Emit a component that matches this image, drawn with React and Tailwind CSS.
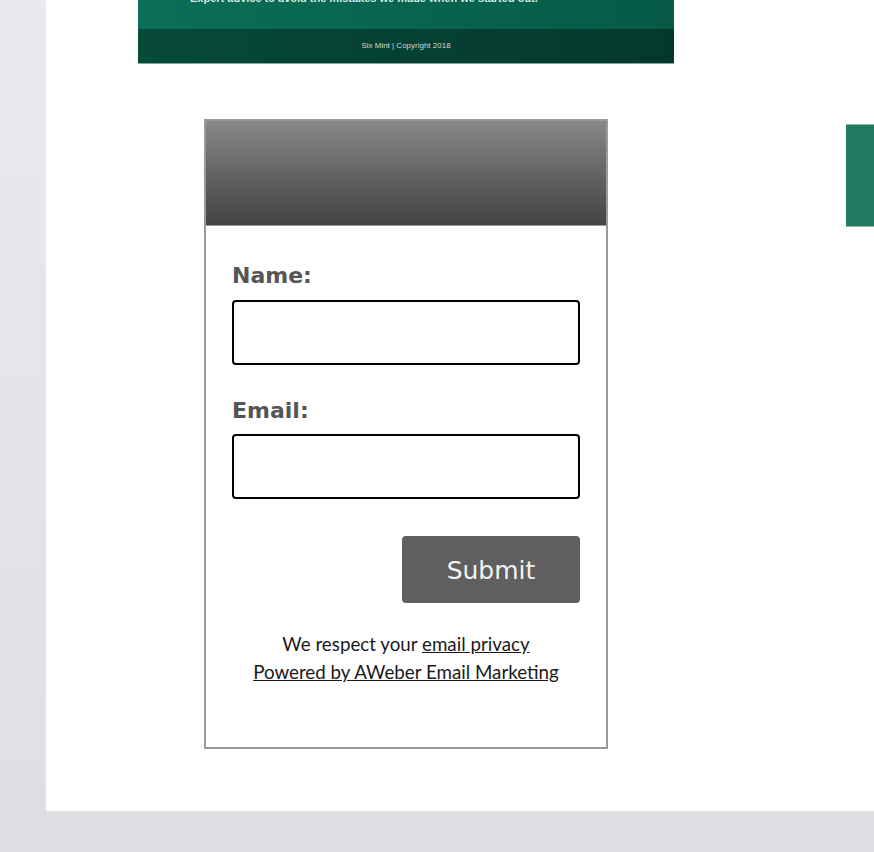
import React from "react";

const BannerImage = () => (
  <div className="ml-[92px] w-[536px] h-[64px] flex flex-col overflow-hidden">
    <div className="h-[29px] bg-gradient-to-r from-[#0a6f58] to-[#065a46] overflow-hidden">
      <p className="-mt-[9px] pl-[52px] text-[11px] leading-[14px] text-[#d8ece6] font-['Liberation_Sans',sans-serif] font-semibold whitespace-nowrap">
        Expert advice to avoid the mistakes we made when we started out.
      </p>
    </div>
    <div className="h-[34px] bg-gradient-to-r from-[#064a3a] to-[#05382c] flex items-center justify-center">
      <span className="text-[8px] text-[#d0d8d5] font-['Liberation_Sans',sans-serif]">
        Six Mint | Copyright 2018
      </span>
    </div>
    <div className="h-[1px] bg-[#7fa89c]"></div>
  </div>
);

const SignupForm = () => (
  <div className="w-[404px] h-[630px] border-2 border-[#9a9a9a] bg-white flex flex-col">
    <div className="h-[105px] bg-gradient-to-b from-[#888888] to-[#444444] border-b border-[#9a9a9a]"></div>

    <div className="px-[26px] pt-[38px] font-['DejaVu_Sans',sans-serif]">
      <label className="block text-[22px] leading-[23px] font-bold text-[#555555]">Name:</label>
      <div className="mt-[13px] w-[348px] h-[65px] border-2 border-black rounded-[4px]"></div>

      <label className="block mt-[34px] text-[22px] leading-[23px] font-bold text-[#555555]">Email:</label>
      <div className="mt-[12px] w-[348px] h-[65px] border-2 border-black rounded-[4px]"></div>

      <div className="w-[348px] flex justify-end mt-[37px]">
        <button className="w-[178px] h-[67px] pt-[2px] bg-[#5f5f5f] rounded-[4px] text-[25px] text-[#f2f2f2]">
          Submit
        </button>
      </div>
    </div>

    <div className="mt-[27px] text-center text-[18.75px] leading-[28px] text-[#1a1a1a] font-['Lato',sans-serif]">
      <p>
        We respect your <span className="underline">email privacy</span>
      </p>
      <p className="underline">Powered by AWeber Email Marketing</p>
    </div>
  </div>
);

export default function App() {
  return (
    <div className="w-[874px] h-[852px] overflow-hidden bg-gradient-to-b from-[#e9eaed] to-[#dedfe3] pl-[46px]">
      <div className="h-[811px] bg-white">
        <BannerImage />
        <div className="flex items-start mt-[55px]">
          <div className="ml-[158px]">
            <SignupForm />
          </div>
          <div className="ml-auto mt-[5px] w-[28px] h-[103px] bg-[#237a62] border-t border-b border-[#8fb8ac]"></div>
        </div>
      </div>
    </div>
  );
}
